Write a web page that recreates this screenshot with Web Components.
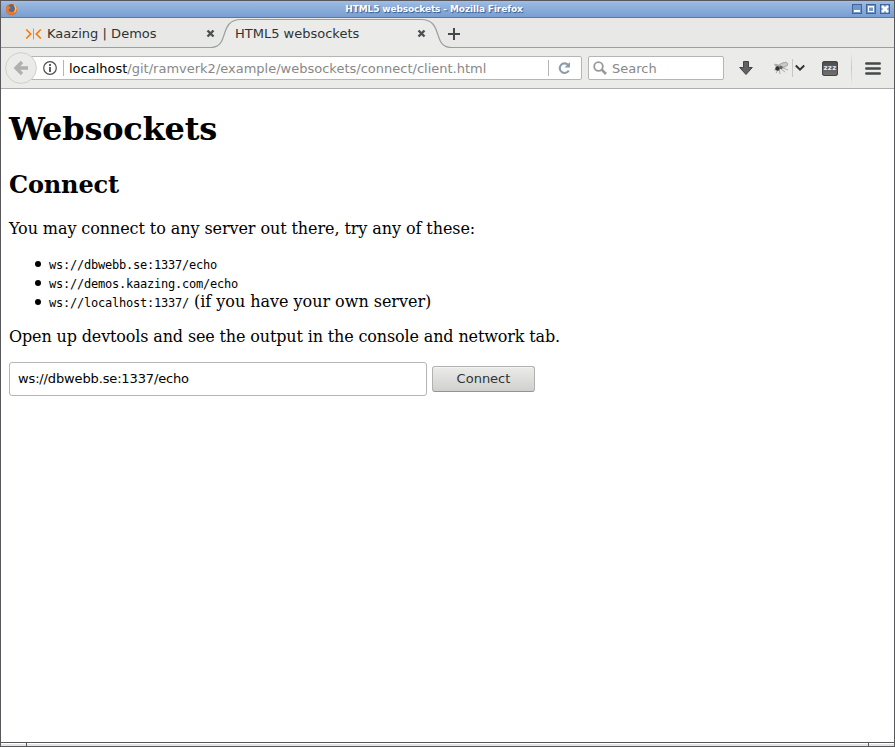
<!DOCTYPE html>
<html lang="en"><head><meta charset="utf-8"><title>HTML5 websockets</title>
<style>body{margin:0;overflow:hidden}</style></head><body>
<browser-window>
<title-bar slot="chrome">HTML5 websockets - Mozilla Firefox</title-bar>
<tab-strip slot="chrome"></tab-strip>
<nav-bar slot="chrome"></nav-bar>
<page-content></page-content>
</browser-window>
<script>
const define=(name,html)=>customElements.define(name,class extends HTMLElement{
  constructor(){super();const t=document.createElement('template');t.innerHTML=html;
    this.attachShadow({mode:'open'}).append(t.content.cloneNode(true));}
});
define('browser-window',`<style>
:host{display:flex;flex-direction:column;box-sizing:border-box;width:895px;height:747px;border:1px solid #57575c;background:#fff;font-family:"DejaVu Sans",sans-serif}
main{flex:1;min-height:0}
footer{height:3px;border-top:1px solid #57575c;display:flex;background:linear-gradient(#fff 0 1px,#e4e4e4 1px)}
i{width:25px;border-right:1px solid #57575c}i+i{margin-left:auto;width:25px;border:0;border-left:1px solid #57575c}
</style><slot name="chrome"></slot><main><slot></slot></main><footer><i></i><i></i></footer>`);

define('title-bar',`<style>
:host{display:flex;align-items:center;height:17px;box-sizing:border-box;background:linear-gradient(#a1c0e8,#95b5df 20%,#799fd1);border-bottom:1px solid #5279b4;color:#fff;font-weight:bold;font-size:9px;padding:0 4px;position:relative}
.t{flex:1;text-align:center;text-shadow:1px 1px 1px #36588b;letter-spacing:-.12px;padding-right:2px}
.b{display:flex;gap:4px}svg{display:block}
</style><svg width="13" height="13" viewBox="0 0 13 13"><circle cx="6.5" cy="6.5" r="5.5" fill="#c9501c"/><circle cx="6.3" cy="5.2" r="3.5" fill="#4a6d9c"/><path d="M1 4Q0 11 6 12Q12 12 12 5Q11 2 9 2Q12 9 7 9Q3 9 4 6L6 5Q3 3 3 1Z" fill="#e67a2e"/><path d="M9.500 1.500Q13 6 9.500 9.500Q11.500 5 9 2" fill="#ffdf75" stroke="#ffc95b" stroke-width=".5"/></svg>
<span class="t"><slot></slot></span>
<span class="b"><svg width="10" height="10"><rect x=".5" y=".5" width="9" height="9" fill="#7198cd" stroke="#3f6599"/><path d="M2 7h6" stroke="#fff" stroke-width="2"/></svg>
<svg width="10" height="10"><rect x=".5" y=".5" width="9" height="9" fill="#7198cd" stroke="#3f6599"/><rect x="2.5" y="3" width="5" height="4.5" fill="none" stroke="#fff"/><path d="M2 2.5h6" stroke="#fff"/></svg>
<svg width="10" height="10"><rect x=".5" y=".5" width="9" height="9" fill="#7198cd" stroke="#3f6599"/><path d="M2 2l6 6m0-6l-6 6" stroke="#fff" stroke-width="2.5"/></svg></span>`);

define('close-icon',`<style>:host{display:block;width:9px;height:9px}svg{display:block}</style><svg width="9" height="9"><path d="M1.5 1.5l6 6m0-6l-6 6" stroke="#4b5153" stroke-width="2.4"/></svg>`);

define('tab-strip',`<style>
:host{display:block;height:30px;background:#e8e8e6;position:relative;color:#2e3436;font-size:13px}
.edge{position:absolute;left:0;top:0}
.row{display:flex;align-items:center;height:31px;position:relative}
.a{display:flex;align-items:center;width:190px;margin-left:24px}.a span{flex:1;margin-left:5px;letter-spacing:.03px}
.b{display:flex;align-items:center;width:191px;margin-left:20px}.b span{flex:1}
span{white-space:nowrap}.plus{margin-left:22px}svg{display:block;flex:none}
</style><svg class="edge" width="893" height="30"><path d="M210 30C229 30 217 1.5 240 1.5H420C443 1.5 431 30 450 30Z" fill="#ebebe9"/><path d="M0 29.5H210C229 29.5 217 1.5 240 1.5H420C443 1.5 431 29.5 450 29.5H893" fill="none" stroke="#9c9fa1" stroke-width="1.2"/></svg>
<div class="row"><div class="a"><svg width="17" height="12"><path d="M1.2 1.500L5.700 6L1.2 10.500M15.800 1.500L11.300 6L15.800 10.500" fill="none" stroke="#f57900" stroke-width="1.6"/><path d="M8.500 .5v11" stroke="#f78a2a" stroke-width="1"/></svg><span>Kaazing | Demos</span><close-icon></close-icon></div>
<div class="b"><span>HTML5 websockets</span><close-icon></close-icon></div>
<svg class="plus" width="12" height="12"><path d="M6 0v12M0 6h12" stroke="#45494b" stroke-width="2"/></svg></div>`);

define('nav-bar',`<style>
:host{display:flex;align-items:center;box-sizing:border-box;height:41px;background:#ebebe9;border-bottom:1px solid #aeaeac;color:#888;font-size:13px;padding-left:4px;position:relative}
svg{display:block;flex:none}
.back{position:relative;z-index:1;margin-right:-17px}
.url,.search{display:flex;align-items:center;box-sizing:border-box;height:24px;background:#fff;border:1px solid #b5b5b3;border-radius:2px;white-space:nowrap}
.url{width:562px;padding-left:22px}.url svg:first-child{margin-right:6px}
.sep{width:1px;height:16px;background:#b5b5b3}
.txt{flex:1;padding-left:5px}b{font-weight:normal;color:#000}
.search{width:136px;margin-left:6px;padding-left:4px;gap:5px}
.dl{margin-left:15px}.bug{margin-left:20px}.sep.s1{height:18px;background:#c6c6c4}.chev{margin-left:2px}.zzz{margin-left:17px;width:16px;height:15px;border-radius:3px;background:linear-gradient(#4a4a4a,#737373);color:#eee;font:bold 7px/14px "DejaVu Sans",sans-serif;text-align:center;box-sizing:border-box;overflow:hidden;box-shadow:inset 0 0 0 1px #444;letter-spacing:.3px}
.s2{width:1px;height:34px;background:linear-gradient(#ebebe9,#c6c6c4,#ebebe9);margin-left:13px}.menu{margin-left:13px}
</style>
<svg class="back" width="32" height="32"><circle cx="16" cy="16" r="15.4" fill="#ebebe9" stroke="#cfcfcd"/><path d="M17 10L11 16L17 22M11 16H23" fill="none" stroke="#b0b0af" stroke-width="3.4"/></svg>
<div class="url"><svg width="14" height="14"><circle cx="7" cy="7" r="6.3" fill="none" stroke="#4d4d4d" stroke-width="1.2"/><path d="M7 6v5M7 3v2" stroke="#4d4d4d" stroke-width="1.8"/></svg><i class="sep"></i><span class="txt"><b>localhost</b>/git/ramverk2/example/websockets/connect/client.html</span><i class="sep"></i><svg width="32" height="14"><path d="M19.8 9.5A4.8 4.8 0 1 1 19 3.8" fill="none" stroke="#8d9cad" stroke-width="2.1"/><path d="M21 1V6.5H15.5Z" fill="#8d9cad"/></svg></div>
<div class="search"><svg width="14" height="14"><circle cx="5.5" cy="5.5" r="4.3" fill="none" stroke="#999" stroke-width="1.8"/><path d="M8.7 8.7L13 13" stroke="#999" stroke-width="2.6"/></svg><span>Search</span></div>
<svg class="dl" width="14" height="14"><path d="M4.5.5h5v6H13.3L7 13.5L.7 6.500H4.5Z" fill="#626262" stroke="#404547"/></svg>
<svg class="bug" width="17" height="14"><g fill="none" stroke="#999" stroke-width=".8"><path d="M1 9L5 8M3 12L6 8M6 7L7 13M8 8L12 11M10 7L15 9M3 3L5 6"/></g><ellipse cx="10.500" cy="4" rx="4.500" ry="2.300" transform="rotate(-18 10.500 4)" fill="#c9c9c9" stroke="#888" stroke-width=".6"/><ellipse cx="5" cy="4.800" rx="4" ry="1.300" transform="rotate(20 5 4.800)" fill="#aaa"/><circle cx="4.500" cy="7.500" r="2.200" fill="#333"/><circle cx="8" cy="6.500" r="1.800" fill="#666"/></svg>
<i class="sep s1" style="margin-left:2px"></i>
<svg class="chev" width="10" height="8"><path d="M.8 1.500L5 5.700L9.200 1.500" fill="none" stroke="#2e3436" stroke-width="2"/></svg>
<div class="zzz">zzz</div><i class="s2"></i>
<svg class="menu" width="16" height="13"><path d="M1.300 1.500h13.400M1.300 6.500h13.400M1.300 11.500h13.400" stroke="#45494b" stroke-width="2.500" stroke-linecap="round"/></svg>`);

define('page-content',`<style>
:host{display:flow-root;padding:0 8px;font:16px/19px "DejaVu Serif",serif;color:#000}
h1{font-size:32px;line-height:37px;margin:22px 0 23px;letter-spacing:-.22px}h2{font-size:24px;line-height:28px;margin:0 0 20px;letter-spacing:-.15px}
p{margin:0 0 16px;letter-spacing:-.083px}p.last{letter-spacing:-.142px}ul{margin:16px 0 15px;padding-left:40px;list-style:none}li{height:19px;line-height:19px;white-space:nowrap;letter-spacing:-.03px}
li::before{content:"";display:inline-block;width:6px;height:6px;border-radius:50%;background:#000;margin:0 8px 0 -14px;vertical-align:2px}
li:last-child{height:20px;line-height:20px}
code{font:12px "DejaVu Sans Mono",monospace;letter-spacing:-.224px}
form{display:flex;align-items:center;gap:5px}
input{box-sizing:border-box;width:418px;height:34px;padding:0 8px 2px;border:1px solid #b5b5b3;border-radius:3px;font:13px "DejaVu Sans",sans-serif;letter-spacing:-.14px;color:#000;background:#fff}
button{box-sizing:border-box;width:103px;height:26px;padding:0 0 1px;border:1px solid #b1b1af;border-bottom-color:#949490;border-radius:3px;background:linear-gradient(#ebebea,#d0d0ce);box-shadow:inset 0 1px #f4f4f3;font:13px "DejaVu Sans",sans-serif;color:#2e3436}
</style><h1>Websockets</h1><h2>Connect</h2><p>You may connect to any server out there, try any of these:</p>
<ul><li><code>ws://dbwebb.se:1337/echo</code></li><li><code>ws://demos.kaazing.com/echo</code></li><li><code>ws://localhost:1337/</code> (if you have your own server)</li></ul>
<p class="last">Open up devtools and see the output in the console and network tab.</p>
<form><input value="ws://dbwebb.se:1337/echo"><button type="button">Connect</button></form>`);
</script></body></html>
